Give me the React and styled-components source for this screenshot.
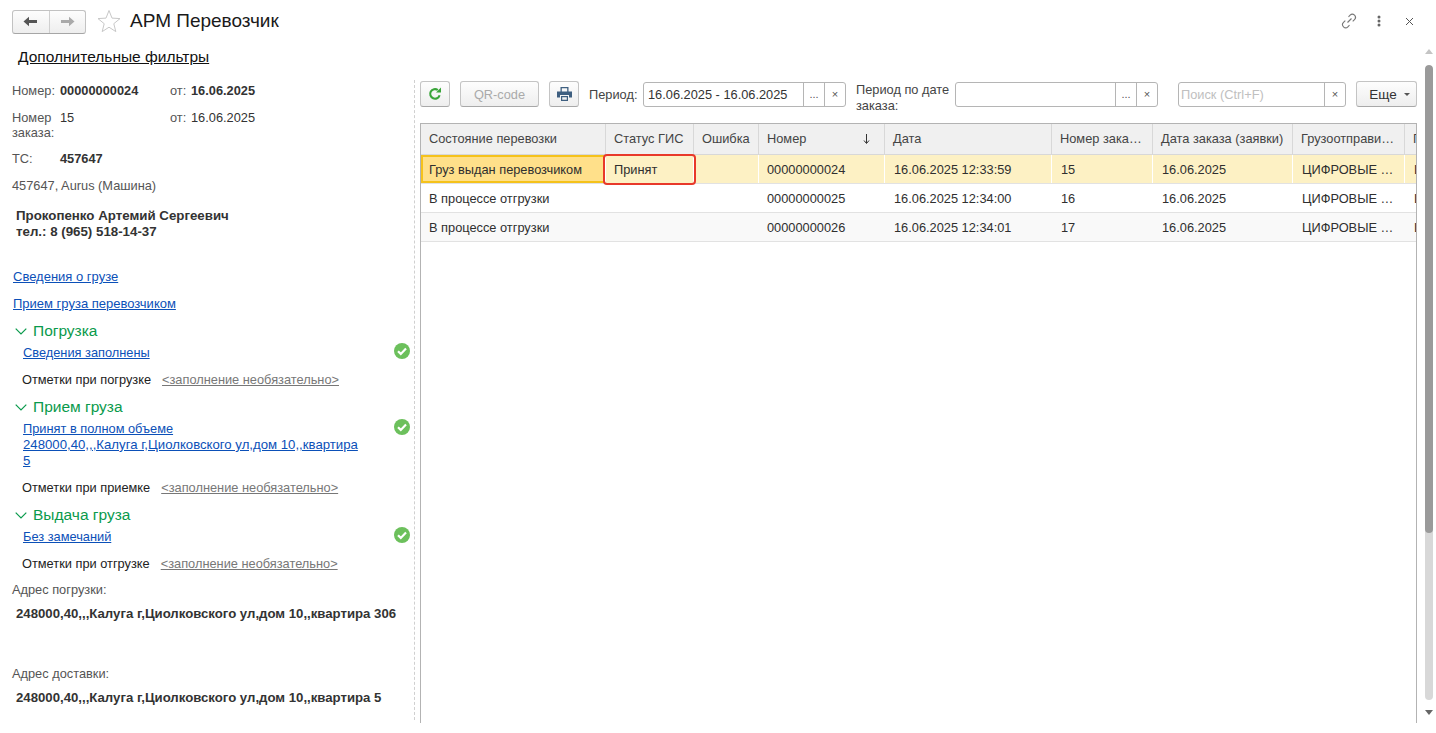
import React from "react";
import styled, { createGlobalStyle } from "styled-components";

const Global = createGlobalStyle`
  html, body { margin: 0; padding: 0; background: #fff; height: 100%; overflow: hidden; }
  body { font-family: "Liberation Sans", Arial, sans-serif; font-size: 12.8px; color: #333; }
  #root { height: 733px; }
`;

const Page = styled.div`
  width: 1436px; height: 733px; display: flex; flex-direction: column; position: relative; overflow: hidden;
`;
const TitleBar = styled.header`
  height: 42px; display: flex; align-items: center; padding-left: 12px; flex: none;
`;
const NavGroup = styled.div`
  width: 74px; height: 24px; box-sizing: border-box; border: 1px solid #c2c2c2; border-bottom-color: #a6a6a6; border-radius: 3px;
  display: flex; background: linear-gradient(#fdfdfd, #eeeeee); margin-top: 1px;
`;
const NavBtn = styled.div`
  flex: 1; display: flex; align-items: center; justify-content: center;
  & + & { border-left: 1px solid #cfcfcf; }
`;
const Star = styled.svg`margin-left: 11px; flex: none;`;
const Title = styled.h1`
  margin: 0 0 0 9px; font-size: 19px; font-weight: 400; color: #1a1a1a; flex: 1;
`;
const TopIcons = styled.div`display: flex; align-items: center; gap: 20px; padding-right: 22px;`;
const CloseIcon = styled.svg`margin-left: 4px;`;
const FilterBar = styled.div`height: 31px; flex: none; padding: 6px 0 0 18px; box-sizing: border-box;`;
const FilterLink = styled.a`font-size: 15.5px; color: #111; text-decoration: underline;`;
const Body = styled.div`flex: 1; display: flex; min-height: 0; align-items: flex-start;`;
const Side = styled.aside`
  width: 415px; flex: none; box-sizing: border-box; padding: 3px 4px 0 12px; border-right: 1px dashed #d0d0d0;
  height: 640px; margin-top: 7px; display: flex; flex-direction: column;
`;
const InfoRow = styled.div`
  display: grid; grid-template-columns: 48px 110px 21px auto; height: ${p => p.$h}px; line-height: 16px;
`;
const Lbl = styled.span`color: #555; line-height: 15px;`;
const Val = styled.span`
  color: #333; font-weight: ${p => (p.$bold ? 700 : 400)};
`;
const Plain = styled.div`color: #555; height: ${p => p.$h}px; line-height: 16px; flex: none;`;
const Strong = styled.div`
  color: #333; font-weight: 700; padding-left: 4px; line-height: 16px; height: ${p => p.$h || 16}px; flex: none;
  font-size: ${p => p.$size || 13.3}px; white-space: nowrap;
`;
const SideLink = styled.a`
  color: #0b50b8; text-decoration: underline; display: block; line-height: 16px; height: ${p => p.$h}px; padding-left: 1px; font-size: 13px; flex: none;
`;
const Group = styled.div`
  display: flex; align-items: center; height: 22px; margin-bottom: 3px; color: #0a9a4c; font-size: 15.5px; padding-left: 3px; gap: 6px; flex: none;
`;
const Item = styled.div`
  display: flex; justify-content: space-between; padding-left: 11px; height: ${p => p.$h}px; line-height: 16px; flex: none;
`;
const ItemLink = styled.a`color: #0b50b8; text-decoration: underline; width: 340px; display: block;`;
const AddressPart = styled.span`font-size: 13.2px;`;
const NoteRow = styled.div`
  display: flex; padding-left: 10px; height: ${p => p.$h}px; line-height: 16px; color: #222; gap: 11px; flex: none;
`;
const NoteLink = styled.a`color: #777; text-decoration: underline;`;
const Check = styled.svg`flex: none; margin-top: -2px;`;

const Main = styled.main`
  flex: 1; padding: 8px 19px 0 5px; box-sizing: border-box; display: flex; flex-direction: column; min-width: 0;
`;
const Toolbar = styled.div`display: flex; align-items: flex-start; height: 42px; flex: none;`;
const Btn = styled.div`
  height: 26px; box-sizing: border-box; border: 1px solid #c4c4c4; border-bottom-color: #a8a8a8; border-radius: 3px;
  background: linear-gradient(#fdfdfd, #eeeeee); display: flex; align-items: center; justify-content: center;
  width: ${p => p.$w}px; margin-left: ${p => p.$ml || 0}px; color: ${p => (p.$off ? "#aaa" : "#333")}; flex: none; gap: 7px;
  padding-left: ${p => p.$pl || 0}px; font-size: ${p => p.$size || 12.8}px;
`;
const ToolLabel = styled.span`
  color: #444; margin-left: ${p => p.$ml}px; line-height: ${p => p.$lh || 27}px; width: ${p => p.$w}px; flex: none; margin-top: ${p => p.$mt || 0}px;
`;
const Input = styled.div`
  height: 25px; box-sizing: border-box; border: 1px solid #b5b5b5; border-radius: 3px; display: flex;
  margin-left: ${p => p.$ml || 0}px; width: ${p => p.$w}px; flex: none; margin-top: 1px; background: #fff;
`;
const InputText = styled.span`
  flex: 1; padding-left: ${p => p.$pl || 4}px; line-height: 23px; color: ${p => (p.$ph ? "#c0c0c0" : "#333")}; white-space: nowrap; overflow: hidden;
`;
const InputBtn = styled.span`
  width: 21px; box-sizing: border-box; border-left: 1px solid #b5b5b5; text-align: center; line-height: 22px; color: #555; flex: none; font-size: 11px;
`;
const Table = styled.div`
  flex: none; height: 600px; box-sizing: border-box; border: 1px solid #b3b3b3; border-bottom: none; overflow: hidden;
`;
const HeadRow = styled.div`display: flex; height: 30px; background: #f0f0f0; border-bottom: 1px solid #d8d8d8;`;
const HeadCell = styled.div`
  width: ${p => p.$w}px; flex: none; box-sizing: border-box; padding: 0 ${p => p.$pr || 0}px 0 8px; line-height: 30px; color: #444;
  border-right: 1px solid #d8d8d8; white-space: nowrap; overflow: hidden; display: flex; justify-content: space-between; align-items: center;
  &:last-child { border-right: none; }
`;
const Row = styled.div`
  display: flex; height: 28px; border-bottom: 1px solid #e2e2e2; background: ${p => p.$bg};
`;
const Cell = styled.div`
  width: ${p => p.$w}px; flex: none; box-sizing: border-box; padding: 1px 0 0 ${p => p.$pl}px; line-height: 28px; color: #2f2f2f; white-space: nowrap; overflow: hidden;
  border-right: ${p => (p.$sel ? "1px solid #fff" : "none")};
  ${p => p.$cur && "background:#ffe08a; box-shadow: inset 0 0 0 2px #f5c21b;"}
`;
const Mark = styled.div`
  position: absolute; left: 603px; top: 154px; width: 93px; height: 31px; box-sizing: border-box; border: 2.5px solid #e8392a; border-radius: 4px; pointer-events: none;
`;
const ScrollTrack = styled.div`position: absolute; right: 3px; top: 49px; width: 8px; height: 666px;`;
const Thumb = styled.div`
  width: 8px; height: 635px; margin-top: 16px; border-radius: 4px; background: #d8d8d8; overflow: hidden;
  &::before { content: ""; display: block; height: 468px; background: #9a9a9a; border-radius: 4px; }
`;
const Tri = styled.div`
  position: absolute; left: 0; width: 0; height: 0; border-left: 4px solid transparent; border-right: 4px solid transparent;
  ${p => (p.$up ? "top: 0; border-bottom: 5px solid #c4c4c4;" : "bottom: 0; border-top: 5px solid #666;")}
`;

const cols = [185, 88, 65, 126, 167, 101, 140, 112, 20];
const heads = ["Состояние перевозки", "Статус ГИС", "Ошибка", "Номер", "Дата", "Номер зака…", "Дата заказа (заявки)", "Грузоотправи…", "Г"];
const rows = [
  ["Груз выдан перевозчиком", "Принят", "", "00000000024", "16.06.2025 12:33:59", "15", "16.06.2025", "ЦИФРОВЫЕ …", "Ц"],
  ["В процессе отгрузки", "", "", "00000000025", "16.06.2025 12:34:00", "16", "16.06.2025", "ЦИФРОВЫЕ …", "Ц"],
  ["В процессе отгрузки", "", "", "00000000026", "16.06.2025 12:34:01", "17", "16.06.2025", "ЦИФРОВЫЕ …", "Ц"],
];
const bgs = ["#fdf1c4", "#ffffff", "#f9f9f9"];

const CheckIcon = () => (
  <Check width="16" height="16" viewBox="0 0 16 16">
    <circle cx="8" cy="8" r="8" fill="#6cc05c" />
    <path d="M4 8.2l2.8 2.7L12 5.6" fill="none" stroke="#fff" strokeWidth="2.2" />
  </Check>
);
const Chevron = () => (
  <svg width="12" height="7" viewBox="0 0 12 7" style={{ flex: "none" }}><path d="M.7.7L6 6l5.3-5.3" fill="none" stroke="#0a9a4c" strokeWidth="1.2" /></svg>
);

export default function App() {
  return (
    <Page>
      <Global />
      <TitleBar>
        <NavGroup>
          <NavBtn><svg width="15" height="11" viewBox="0 0 15 11"><path d="M0.5 5.5L6 0.8V4h8v3H6v3.2z" fill="#555" /></svg></NavBtn>
          <NavBtn><svg width="15" height="11" viewBox="0 0 15 11"><path d="M14.5 5.5L9 0.8V4H1v3h8v3.2z" fill="#aaa" /></svg></NavBtn>
        </NavGroup>
        <Star width="24" height="24" viewBox="0 0 24 24"><path d="M12 1.5l3 7.6 8 .5-6.2 5.1 2 7.9L12 18.2l-6.8 4.4 2-7.9L1 9.6l8-.5z" fill="#fff" stroke="#c8c8c8" /></Star>
        <Title>АРМ Перевозчик</Title>
        <TopIcons>
          <svg width="16" height="16" viewBox="0 0 16 16" fill="none" stroke="#777" strokeWidth="1.1"><path d="M6.5 9.5l4-4M7.5 3.8l1.6-1.6a3 3 0 0 1 4.4 4.4l-1.8 1.8M8.5 12.2l-1.6 1.6a3 3 0 0 1-4.4-4.4l1.8-1.8" /></svg>
          <svg width="4" height="12" viewBox="0 0 4 12" fill="#666"><circle cx="2" cy="2" r="1.5" /><circle cx="2" cy="6" r="1.5" /><circle cx="2" cy="10" r="1.5" /></svg>
          <CloseIcon width="9" height="9" viewBox="0 0 9 9" stroke="#555" strokeWidth="1"><path d="M1 1l7 7M8 1l-7 7" /></CloseIcon>
        </TopIcons>
      </TitleBar>
      <FilterBar><FilterLink>Дополнительные фильтры</FilterLink></FilterBar>
      <Body>
        <Side>
          <InfoRow $h={27}><Lbl>Номер:</Lbl><Val $bold>00000000024</Val><Lbl>от:</Lbl><Val $bold>16.06.2025</Val></InfoRow>
          <InfoRow $h={41}><Lbl>Номер заказа:</Lbl><Val>15</Val><Lbl>от:</Lbl><Val>16.06.2025</Val></InfoRow>
          <InfoRow $h={27}><Lbl>ТС:</Lbl><Val $bold>457647</Val></InfoRow>
          <Plain $h={30}>457647, Aurus (Машина)</Plain>
          <Strong>Прокопенко Артемий Сергеевич</Strong>
          <Strong $h={45}>тел.: 8 (965) 518-14-37</Strong>
          <SideLink $h={27}>Сведения о грузе</SideLink>
          <SideLink $h={24}>Прием груза перевозчиком</SideLink>
          <Group><Chevron />Погрузка</Group>
          <Item $h={27}><ItemLink>Сведения заполнены</ItemLink><CheckIcon /></Item>
          <NoteRow $h={24}>Отметки при погрузке<NoteLink>&lt;заполнение необязательно&gt;</NoteLink></NoteRow>
          <Group><Chevron />Прием груза</Group>
          <Item $h={59}><ItemLink>Принят в полном объеме<br /><AddressPart>248000,40,,,Калуга г,Циолковского ул,дом 10,,квартира 5</AddressPart></ItemLink><CheckIcon /></Item>
          <NoteRow $h={24}>Отметки при приемке<NoteLink>&lt;заполнение необязательно&gt;</NoteLink></NoteRow>
          <Group><Chevron />Выдача груза</Group>
          <Item $h={27}><ItemLink>Без замечаний</ItemLink><CheckIcon /></Item>
          <NoteRow $h={26}>Отметки при отгрузке<NoteLink>&lt;заполнение необязательно&gt;</NoteLink></NoteRow>
          <Plain $h={24}>Адрес погрузки:</Plain>
          <Strong $h={60} $size={13.2}>248000,40,,,Калуга г,Циолковского ул,дом 10,,квартира 306</Strong>
          <Plain $h={24}>Адрес доставки:</Plain>
          <Strong $size={13.2}>248000,40,,,Калуга г,Циолковского ул,дом 10,,квартира 5</Strong>
        </Side>
        <Main>
          <Toolbar>
            <Btn $w={30}>
              <svg width="14" height="14" viewBox="0 0 14 14"><path d="M11.6 8.2A4.8 4.8 0 1 1 9.8 3" fill="none" stroke="#3aa53a" strokeWidth="2.1" /><path d="M8 5.6h5V.6z" fill="#3aa53a" /></svg>
            </Btn>
            <Btn $w={79} $ml={10} $off>QR-code</Btn>
            <Btn $w={30} $ml={10}>
              <svg width="15" height="14" viewBox="0 0 15 14"><path fillRule="evenodd" d="M3.5 0h8v4.5h-1.300V1.300H4.800v3.200H3.500zM0 4.500h15V10.500h-3V8H3v2.500H0zM4 9h7v5H4zM5.200 10.200v2.600h4.600v-2.600z" fill="#3e5f80" /></svg>
            </Btn>
            <ToolLabel $ml={10} $w={54}>Период:</ToolLabel>
            <Input $w={203}><InputText>16.06.2025 - 16.06.2025</InputText><InputBtn>...</InputBtn><InputBtn>×</InputBtn></Input>
            <ToolLabel $ml={10} $w={99} $lh={16} $mt={1}>Период по дате заказа:</ToolLabel>
            <Input $w={203}><InputText /><InputBtn>...</InputBtn><InputBtn>×</InputBtn></Input>
            <Input $w={168} $ml={20}><InputText $ph $pl={2}>Поиск (Ctrl+F)</InputText><InputBtn>×</InputBtn></Input>
            <Btn $w={61} $ml={10} $pl={6} $size={13.5}>Еще<svg width="6" height="3" viewBox="0 0 6 3"><path d="M0 0h6L3 3z" fill="#555" /></svg></Btn>
          </Toolbar>
          <Table>
            <HeadRow>
              {heads.map((h, i) => (
                <HeadCell key={i} $w={cols[i]} $pr={i === 3 ? 13 : 0}>
                  {h}
                  {i === 3 && <svg width="9" height="12" viewBox="0 0 9 12"><path d="M4.500 1v9M2 7.500l2.500 3 2.500-3" fill="none" stroke="#333" /></svg>}
                </HeadCell>
              ))}
            </HeadRow>
            {rows.map((r, ri) => (
              <Row key={ri} $bg={bgs[ri]}>
                {r.map((c, i) => <Cell key={i} $w={cols[i]} $pl={i > 3 ? 9 : 8} $sel={ri === 0} $cur={ri === 0 && i === 0}>{c}</Cell>)}
              </Row>
            ))}
          </Table>
        </Main>
      </Body>
      <Mark />
      <ScrollTrack><Tri $up /><Thumb /><Tri /></ScrollTrack>
    </Page>
  );
}
